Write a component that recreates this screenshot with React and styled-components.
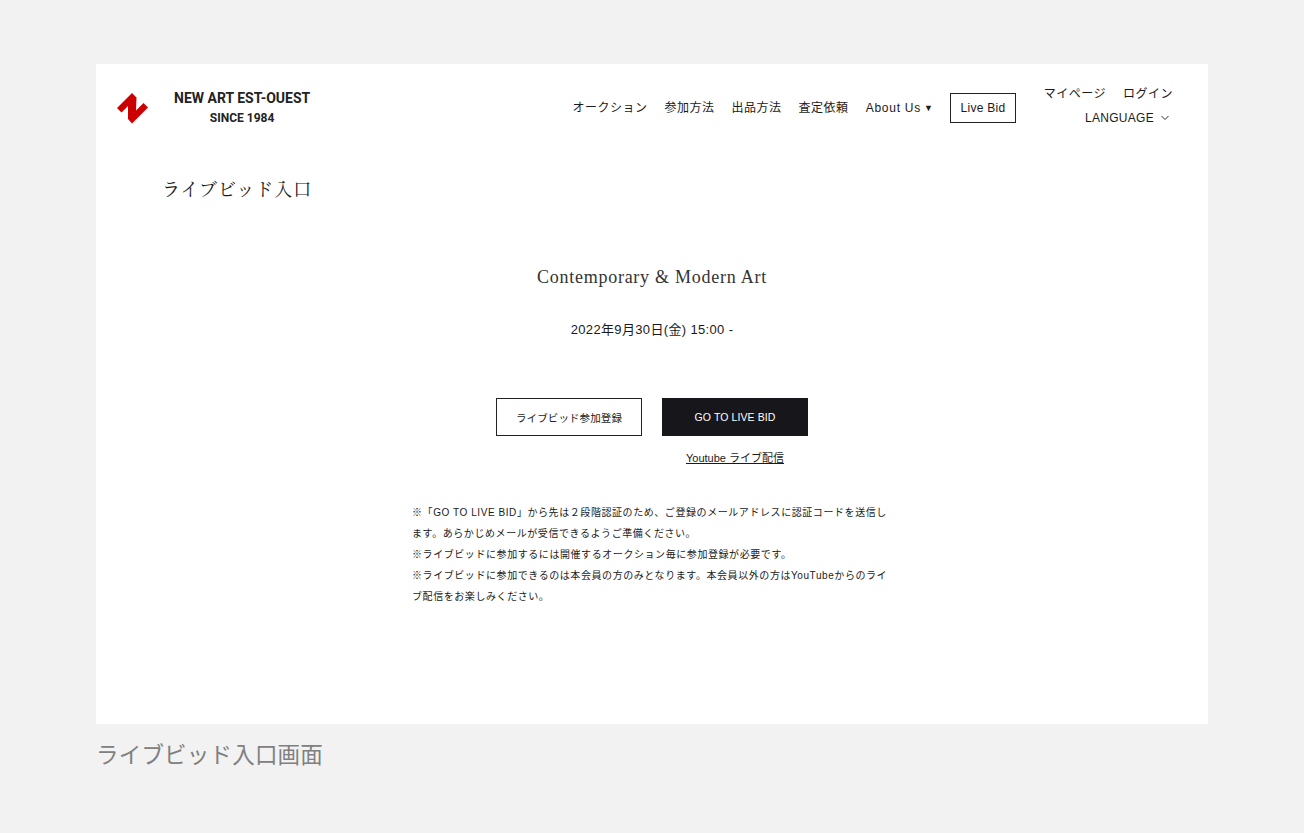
import React from 'react'
import styled, { createGlobalStyle } from 'styled-components'

const sans = '"Liberation Sans", "Noto Sans CJK JP", sans-serif'
const serif = '"Liberation Serif", "Noto Serif CJK JP", "Noto Sans CJK JP", serif'

const navItems = ['オークション', '参加方法', '出品方法', '査定依頼']

const notes = [
  '※「GO TO LIVE BID」から先は２段階認証のため、ご登録のメールアドレスに認証コードを送信します。あらかじめメールが受信できるようご準備ください。',
  '※ライブビッドに参加するには開催するオークション毎に参加登録が必要です。',
  '※ライブビッドに参加できるのは本会員の方のみとなります。本会員以外の方はYouTubeからのライブ配信をお楽しみください。',
]

function Logo() {
  return (
    <LogoMark viewBox="0 0 32 33">
      <path d="M0 16 L15 1 L19.5 5.5 L19 18.5 L26.5 11 L31 15.5 L15 31.5 L11 27 L11 14 L4.5 20.5 Z" fill="#cc0000" />
    </LogoMark>
  )
}

export default function App() {
  return (
    <>
      <GlobalStyle />
      <Page>
        <Sheet>
          <Header>
            <Brand>
              <Logo />
              <BrandText>
                <BrandName>NEW ART EST-OUEST</BrandName>
                <BrandSince>SINCE 1984</BrandSince>
              </BrandText>
            </Brand>
            <Nav>
              {navItems.map((item, index) => (
                <NavLink key={index}>{item}</NavLink>
              ))}
              <NavLink $latin>About Us <Caret>▼</Caret></NavLink>
              <LiveBid>Live Bid</LiveBid>
            </Nav>
            <UserMenu>
              <UserRow>
                <span>マイページ</span>
                <span>ログイン</span>
              </UserRow>
              <LanguageRow>
                LANGUAGE
                <svg width="8" height="6" viewBox="0 0 8 6" fill="none" stroke="#333" strokeWidth="1">
                  <path d="M.5 1 L4 4.5 L7.5 1" />
                </svg>
              </LanguageRow>
            </UserMenu>
          </Header>
          <PageTitle>ライブビッド入口</PageTitle>
          <AuctionName>Contemporary &amp; Modern Art</AuctionName>
          <AuctionDate>2022年9月30日(金) 15:00 -</AuctionDate>
          <Actions>
            <ActionButton>ライブビッド参加登録</ActionButton>
            <ActionColumn>
              <ActionButton $dark>GO TO LIVE BID</ActionButton>
              <StreamLink>Youtube ライブ配信</StreamLink>
            </ActionColumn>
          </Actions>
          <Notes>
            {notes.map((note, index) => (
              <p key={index}>{note}</p>
            ))}
          </Notes>
        </Sheet>
        <Caption>ライブビッド入口画面</Caption>
      </Page>
    </>
  )
}

const GlobalStyle = createGlobalStyle`
  html, body {
    margin: 0;
    background: #f2f2f2;
  }
`

const Page = styled.div`
  width: 1304px;
  height: 833px;
  overflow: hidden;
  padding: 64px 96px 0;
  box-sizing: border-box;
  background: #f2f2f2;
  font-family: ${sans};
`

const Sheet = styled.div`
  height: 660px;
  background: #fff;
  color: #1a1a1a;
  display: flex;
  flex-direction: column;
  align-items: center;
`

const Header = styled.div`
  align-self: stretch;
  height: 78px;
  display: flex;
  align-items: flex-start;
  padding: 0 35px 0 21px;
`

const Brand = styled.div`
  display: flex;
  align-items: center;
  gap: 25px;
  padding-top: 26px;
`

const LogoMark = styled.svg`
  width: 32px;
  height: 33px;
  margin-top: 1px;
`

const BrandText = styled.div`
  display: flex;
  flex-direction: column;
  align-items: center;
  gap: 4px;
  font-family: Roboto, ${sans};
  font-weight: 700;
  color: #222;
`

const BrandName = styled.div`
  font-size: 14px;
  line-height: 17px;
`

const BrandSince = styled.div`
  font-size: 12px;
  line-height: 15px;
`

const Nav = styled.div`
  margin-left: auto;
  display: flex;
  align-items: center;
  gap: 17px;
  padding-top: 29px;
  font-size: 12px;
  letter-spacing: 0.5px;
`

const NavLink = styled.span`
  white-space: nowrap;
  line-height: 16px;
  letter-spacing: ${(props) => (props.$latin ? '0.75px' : '0.5px')};
`

const Caret = styled.span`
  font-size: 9px;
  vertical-align: 1px;
  letter-spacing: 0;
  margin-left: -1px;
`

const LiveBid = styled.span`
  width: 66px;
  height: 30px;
  box-sizing: border-box;
  border: 1px solid #222;
  padding-bottom: 1px;
  display: flex;
  align-items: center;
  justify-content: center;
  white-space: nowrap;
  letter-spacing: 0.3px;
`

const UserMenu = styled.div`
  width: 130px;
  margin-left: 27px;
  padding-top: 22px;
  font-size: 12px;
  letter-spacing: 0.5px;
  white-space: nowrap;
  display: flex;
  flex-direction: column;
  align-items: flex-end;
  gap: 7px;
`

const UserRow = styled.div`
  display: flex;
  gap: 17px;
  line-height: 17px;
`

const LanguageRow = styled.div`
  display: flex;
  align-items: center;
  gap: 7px;
  line-height: 16px;
  padding-right: 4px;
  letter-spacing: 0.3px;
`

const PageTitle = styled.h1`
  align-self: flex-start;
  margin: 36px 0 0 66px;
  font-family: ${serif};
  font-weight: 400;
  font-size: 18px;
  line-height: 24px;
  letter-spacing: 1px;
`

const AuctionName = styled.div`
  margin-top: 62px;
  font-family: ${serif};
  font-size: 18px;
  line-height: 26px;
  letter-spacing: 0.75px;
  color: #333;
`

const AuctionDate = styled.div`
  margin-top: 31px;
  font-size: 13px;
  line-height: 18px;
  letter-spacing: 0.35px;
`

const Actions = styled.div`
  margin-top: 59px;
  display: flex;
  gap: 20px;
`

const ActionColumn = styled.div`
  display: flex;
  flex-direction: column;
  align-items: center;
`

const ActionButton = styled.div`
  width: 146px;
  height: 38px;
  box-sizing: border-box;
  border: 1px solid ${(props) => (props.$dark ? '#16161b' : '#222')};
  background: ${(props) => (props.$dark ? '#16161b' : '#fff')};
  color: ${(props) => (props.$dark ? '#fff' : '#1a1a1a')};
  font-size: 10.5px;
  letter-spacing: 0.1px;
  display: flex;
  align-items: center;
  justify-content: center;
`

const StreamLink = styled.span`
  margin-top: 15px;
  font-size: 11px;
  line-height: 14px;
  text-decoration: underline;
`

const Notes = styled.div`
  margin-top: 37px;
  width: 480px;
  font-size: 10px;
  line-height: 21px;
  letter-spacing: 0.57px;

  p {
    margin: 0;
  }
`

const Caption = styled.div`
  margin-top: 19px;
  font-size: 22.5px;
  letter-spacing: 0.2px;
  line-height: 26px;
  color: #808080;
`
